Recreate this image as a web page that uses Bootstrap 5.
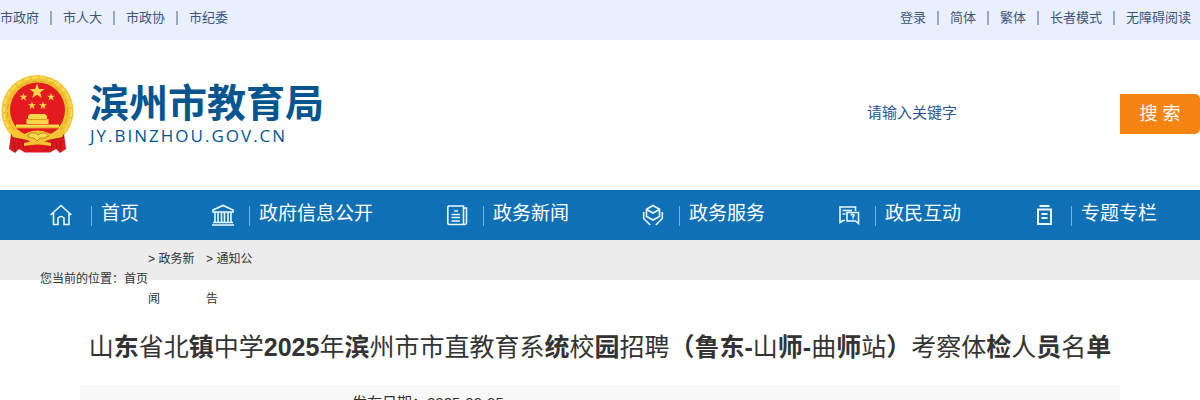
<!DOCTYPE html>
<html lang="zh-CN">
<head>
<meta charset="utf-8">
<meta name="viewport" content="width=device-width, initial-scale=1">
<title>滨州市教育局</title>
<link rel="stylesheet" href="https://cdn.jsdelivr.net/npm/bootstrap@5.3.0/dist/css/bootstrap.min.css">
<style>
body{font-family:"Liberation Sans","Noto Sans CJK SC",sans-serif;color:#333;background:#fff}
a{color:inherit;text-decoration:none}
.topbar{background:#e9effb;color:#3c5580;font-size:13px;line-height:20px;padding:8px 9px 12px 0}
.split{width:2px;height:14px;margin:0 11px;background:#9aa9c3}
.masthead{padding:34px 0 36px}
.brand-name{font-size:39px;font-weight:700;line-height:44px;color:#06558f}
.brand-url{font-family:"Open Sans",sans-serif;font-size:17px;line-height:20px;letter-spacing:2px;color:#06558f}
.search-box{width:268px;height:36px;border:0;padding:0 15px;font-size:15px;color:#2b5597;outline:0}
.search-box::placeholder{color:#2b5597;opacity:1}
.search-btn{width:80px;height:40px;border:0;background:#f58412;color:#fff;font-size:18px;border-radius:0 5px 5px 0}
.mainnav{background:#1070b5;color:#fff;padding:0 43px 2px 50px;font-size:19px;line-height:48px;min-height:50px}
.mainnav svg{width:30px;height:24px;fill:none;stroke:#e8f8ff;stroke-width:1.6;margin-top:2px}
.mainnav i{width:1px;height:20px;background:#6fb2e4;margin:4px 9px 0 11px}
.crumbs{display:flow-root;background:#ececec;height:40px;font-size:12px;line-height:40px;padding-left:40px}
.crumbs .trail{margin-top:-1px}
.crumbs li{width:47px;margin-right:11px;word-break:break-all}
.headline{font-size:25px;line-height:38px;margin:48px 0 19px;font-weight:400}
.meta{margin:0 80px;background:#f8f8f8;font-size:15px;line-height:36px;padding-left:272px}
</style>
</head>
<body class="vh-100 overflow-hidden">
<div class="topbar d-flex justify-content-between">
  <div class="d-flex align-items-center">
    <a href="#">市政府</a><span class="split"></span>
    <a href="#">市人大</a><span class="split"></span>
    <a href="#">市政协</a><span class="split"></span>
    <a href="#">市纪委</a>
  </div>
  <div class="d-flex align-items-center">
    <a href="#">登录</a><span class="split"></span>
    <a href="#">简体</a><span class="split"></span>
    <a href="#">繁体</a><span class="split"></span>
    <a href="#">长者模式</a><span class="split"></span>
    <a href="#">无障碍阅读</a>
  </div>
</div>

<header class="masthead d-flex justify-content-between align-items-center">
  <a href="#" class="d-flex align-items-center">
    <svg width="74" height="80" viewBox="0 0 74 80" aria-hidden="true">
      <circle cx="37.500" cy="37" r="36" fill="#f2c432"/>
      <circle cx="37.500" cy="37" r="30" fill="none" stroke="#dba527" stroke-width="1" stroke-dasharray="5 3"/>
      <circle cx="37.500" cy="37" r="33.500" fill="none" stroke="#fadb55" stroke-width="2" stroke-dasharray="6 2"/>
      <circle cx="37.500" cy="36" r="27.500" fill="#e31b20"/>
      <g fill="#f9d648">
        <path d="M37 9.500l2 5.600h5.500l-4.400 3.400 1.700 5.500-4.800-3.300-4.800 3.300 1.700-5.500-4.400-3.400H35z"/>
        <path d="M23.500 19l1 2.800h3l-2.400 1.800.9 2.900-2.500-1.700-2.500 1.700.9-2.900-2.400-1.800h3zM51 19l1 2.800h3l-2.400 1.800.9 2.900-2.500-1.700-2.500 1.700.9-2.900-2.400-1.800h3zM32 27.500l1 2.800h3l-2.400 1.800.9 2.900-2.500-1.700-2.500 1.700.9-2.900-2.400-1.800h3zM43 27.500l1 2.800h3l-2.400 1.800.9 2.900-2.500-1.700-2.500 1.700.9-2.900-2.400-1.800h3z"/>
        <path d="M28 42l2-2h15l2 2v3H28zM26.500 45h22v5h-22zM16 50.500h43v4H16z"/>
      </g>
      <path d="M16 54h43M28 45.500h19" stroke="#d99a1c" stroke-width="1"/>
      <path d="M11 60q12 7 26.500 7T64 60l2 15-6 4-4-4-6 3.500H25L19 75l-4 4-6-4z" fill="#dd181e"/>
      <path d="M16 54.500h43l-5 3H21z" fill="#e31b20"/>
      <path d="M10 55q9 2 14 5l8-3q5-1 11 0l8 3q5-3 14-5l-3 9-12 1-8 4h-9l-8-4-12-1z" fill="#f2c432"/>
      <path d="M27 62l4-3h5l2 2 3-2h4l4 3-5 2h-4l-3 3-3-3h-3z" fill="#fadb55" stroke="#c98716" stroke-width="1"/>
      <path d="M24 69q14-4 27 0v3q-13-3-27 0z" fill="#f2c432"/>
      <path d="M11 63l11 3 2 8M64 63l-11 3-2 8M14 67l1 10M19 68l-1 7M61 67l-1 10M56 68l1 7M27 73l3 4M48 73l-3 4" fill="none" stroke="#a8141a" stroke-width="1"/>
    </svg>
    <span class="d-flex flex-column ms-3">
      <span class="brand-name">滨州市教育局</span>
      <span class="brand-url">JY.BINZHOU.GOV.CN</span>
    </span>
  </a>
  <form class="d-flex align-items-start">
    <input class="search-box" type="text" aria-label="请输入关键字" placeholder="请输入关键字">
    <button class="search-btn" type="button">搜 索</button>
  </form>
</header>

<nav class="mainnav d-flex justify-content-between align-items-start">
  <a href="#" class="d-flex align-items-center"><svg viewBox="0 0 30 24"><path d="M.6 12L11 2.500 21.400 12M3.500 10v11.500h4.500v-6.500q3-3 6 0v6.500h5V10"/></svg><i></i>首页</a>
  <a href="#" class="d-flex align-items-center"><svg viewBox="0 0 30 24"><path d="M5 7L15 2.500 25 7v2H5zM7 9v10M10 9v10M13.500 9v10M16.500 9v10M20 9v10M23 9v10M5 19.500h20M4 22h22"/></svg><i></i>政府信息公开</a>
  <a href="#" class="d-flex align-items-center"><svg viewBox="0 0 30 24"><path d="M6 3h15.500v18.500H7.500q-1.700 0-1.700-1.700V3M21.500 5h3v14.500q0 2-2 2h-2M12 8h4M9.500 11.500h8.500M9.500 14.500h8.500M9.500 18h8.500"/></svg><i></i>政务新闻</a>
  <a href="#" class="d-flex align-items-center"><svg viewBox="0 0 30 24"><path d="M15 2.500l6.500 3.700v7.300L15 17l-6.500-3.500V6.200zM8.500 6.500L15 10l6.500-3.500M5.700 9v6.500l6.500 6.500M24.300 9v6.500l-6.500 6.500"/></svg><i></i>政务服务</a>
  <a href="#" class="d-flex align-items-center"><svg viewBox="0 0 30 24"><path d="M11 17.500H9L6 19.500V4h15.500v4M8.500 7.500H18M8.500 11h3M13 9.500h11.500v11l-3-2.500H13zM17 12.500q.2-1.200 1.800-1.200 2.400.6.200 2.400v1M19 15.500v1"/></svg><i></i>政民互动</a>
  <a href="#" class="d-flex align-items-center"><svg viewBox="0 0 30 24"><path stroke-width="2" d="M8 6.500h13v14.500H8zM9.500 3h10M11.500 11h6M11.500 15h6"/></svg><i></i>专题专栏</a>
</nav>

<div class="crumbs">
  <div class="trail d-flex align-items-center">
    <span>您当前的位置：<a href="#">首页</a></span>
    <ul class="list-unstyled d-flex mb-0">
      <li>&gt; <a href="#">政务新闻</a></li>
      <li>&gt; <a href="#">通知公告</a></li>
    </ul>
  </div>
</div>

<main>
  <h1 class="headline text-center">山<b>东</b>省北<b>镇</b>中学<b>2025</b>年<b>滨</b>州市市直教育系<b>统</b>校<b>园</b>招聘<b>（鲁东-</b>山<b>师-</b>曲<b>师</b>站<b>）</b>考察体<b>检</b>人<b>员</b>名<b>单</b></h1>
  <div class="meta">发布日期：2025-09-05</div>
</main>
<script src="https://cdn.jsdelivr.net/npm/bootstrap@5.3.0/dist/js/bootstrap.bundle.min.js"></script>
</body>
</html>
